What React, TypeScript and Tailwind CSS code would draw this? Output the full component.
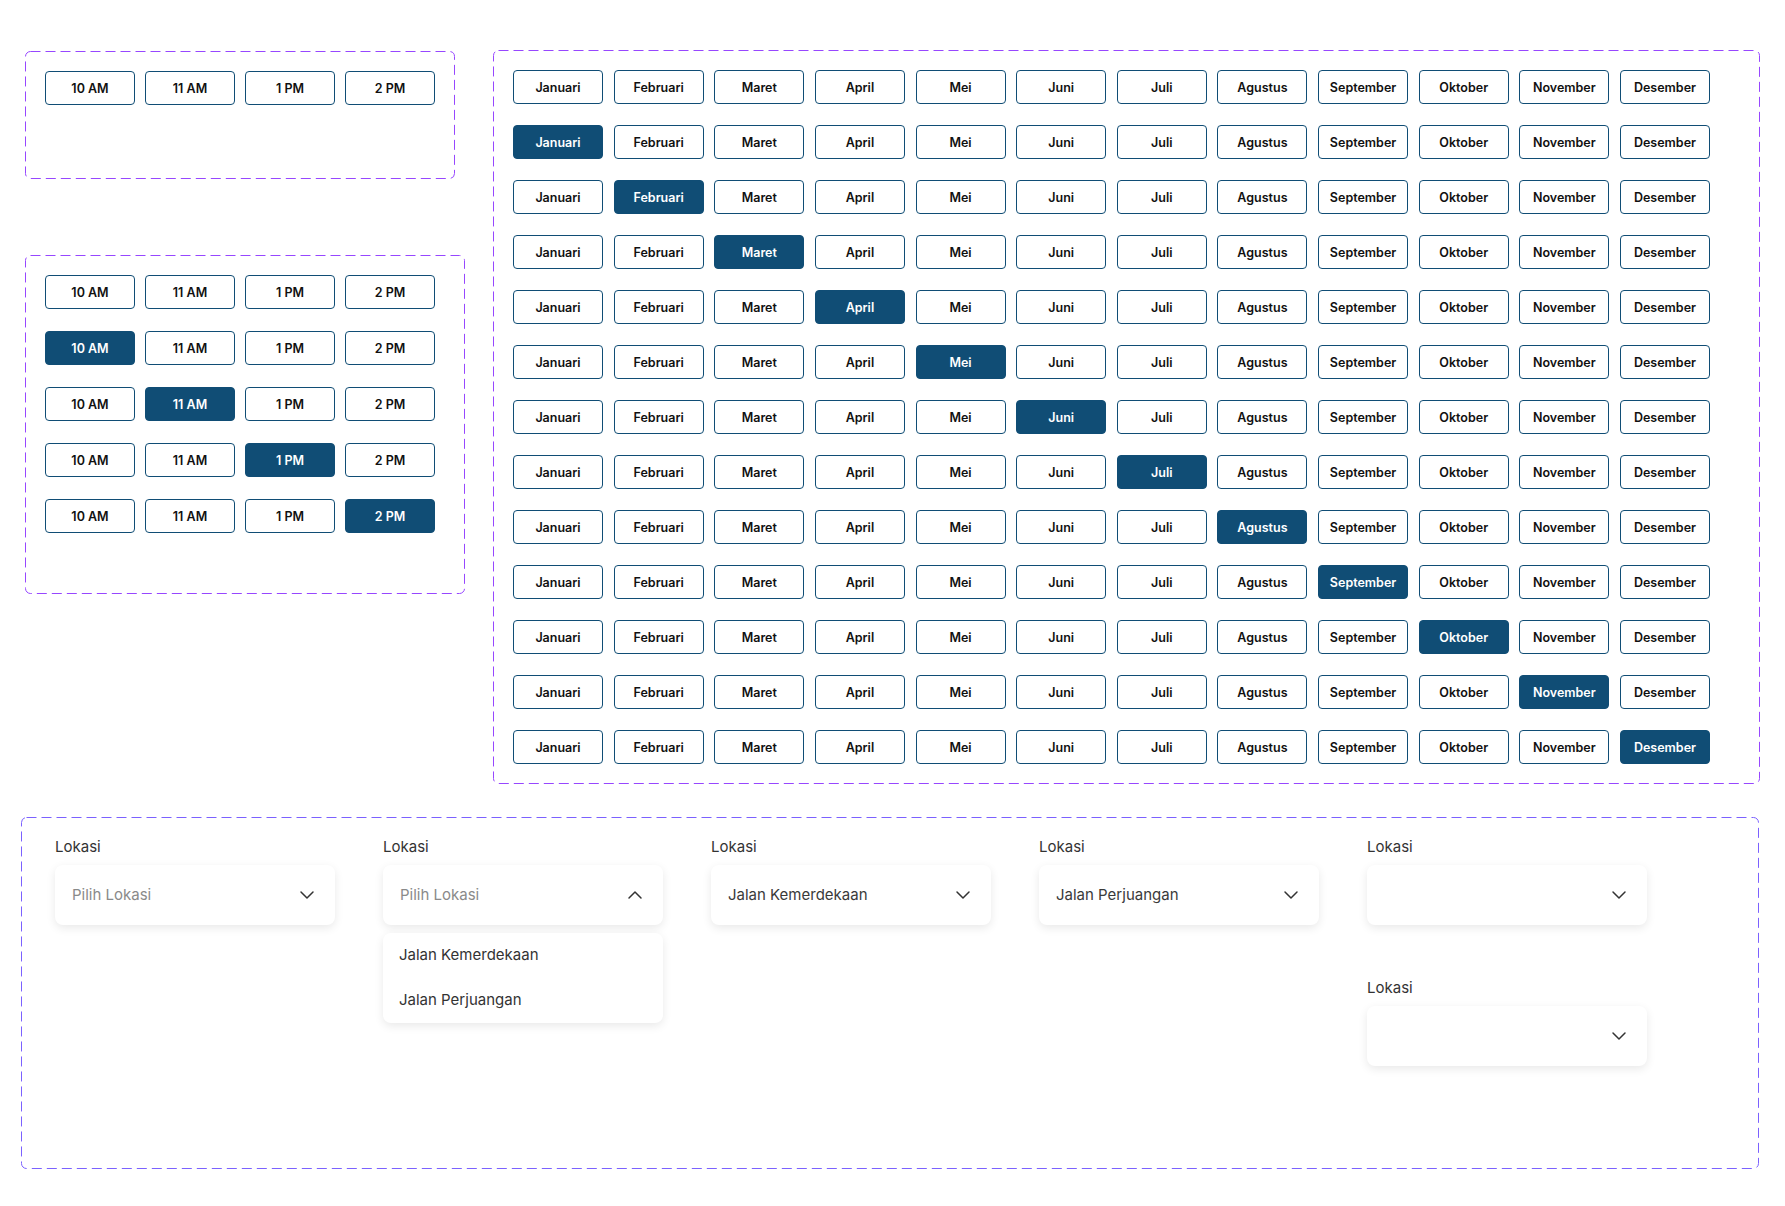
import { ChevronDown, ChevronUp } from "lucide-react";
import type { ReactNode } from "react";

const times = ["10 AM", "11 AM", "1 PM", "2 PM"];
const months = [
  "Januari",
  "Februari",
  "Maret",
  "April",
  "Mei",
  "Juni",
  "Juli",
  "Agustus",
  "September",
  "Oktober",
  "November",
  "Desember",
];

// Figma-style dashed frame around a component set
function Frame({ color, className, children }: { color: string; className: string; children: ReactNode }) {
  return (
    <div className={`relative ${className}`}>
      <svg className="pointer-events-none absolute inset-0 h-full w-full overflow-visible">
        <rect
          x="0.5"
          y="0.5"
          rx="5"
          className="h-[calc(100%-1px)] w-[calc(100%-1px)]"
          fill="none"
          stroke={color}
          strokeDasharray="10 5"
        />
      </svg>
      {children}
    </div>
  );
}

function Chip({ label, active, className = "" }: { label: string; active?: boolean; className?: string }) {
  return (
    <button
      className={`flex h-[34px] items-center justify-center rounded-[4px] border border-[#104d75] pt-[2px] text-[12.5px] font-semibold ${
        active ? "bg-[#104d75] text-white" : "bg-white text-[#111]"
      } ${className}`}
    >
      {label}
    </button>
  );
}

function Select({
  value,
  placeholder,
  open,
  options = [],
}: {
  value?: string;
  placeholder?: string;
  open?: boolean;
  options?: string[];
}) {
  return (
    <div className="w-[280px]">
      <div className="text-[15px] leading-5 text-[#333]">Lokasi</div>
      <div className="relative mt-2">
        <button className="flex h-[60px] w-full items-center justify-between rounded-lg bg-white pl-[17px] pr-4 shadow-[0_3px_10px_rgba(0,0,0,0.09)]">
          {value ? (
            <span className="text-[15px] text-[#3a3a3a]">{value}</span>
          ) : (
            <span className="text-[15px] text-[#8a8a8a]">{placeholder}</span>
          )}
          {open ? (
            <ChevronUp size={24} strokeWidth={1.5} className="text-[#333]" />
          ) : (
            <ChevronDown size={24} strokeWidth={1.5} className="text-[#333]" />
          )}
        </button>
        {open && (
          <div className="absolute left-0 top-full mt-2 w-full rounded-lg bg-white shadow-[0_3px_10px_rgba(0,0,0,0.09)]">
            {options.map((o) => (
              <div key={o} className="flex h-[45px] items-center px-4 text-[15px] text-[#333]">
                {o}
              </div>
            ))}
          </div>
        )}
      </div>
    </div>
  );
}

export default function App() {
  return (
    <div className="min-h-screen bg-white pt-[50px] font-['Inter',sans-serif]">
      <div className="flex items-start">
        <div className="ml-[25px] mt-px flex flex-col gap-[76px]">
          <Frame color="#9747ff" className="h-[128px] w-[430px] pl-5 pt-5">
            <div className="flex gap-[10px]">
              {times.map((t) => (
                <Chip key={t} label={t} className="w-[90px]" />
              ))}
            </div>
          </Frame>

          <Frame color="#9747ff" className="h-[339px] w-[440px] pl-5 pt-5">
            <div className="flex flex-col gap-[22px]">
              {[-1, 0, 1, 2, 3].map((sel) => (
                <div key={sel} className="flex gap-[10px]">
                  {times.map((t, i) => (
                    <Chip key={t} label={t} active={i === sel} className="w-[90px]" />
                  ))}
                </div>
              ))}
            </div>
          </Frame>
        </div>

        <Frame color="#9747ff" className="ml-[28px] h-[734px] w-[1267px] pl-5 pt-5">
          <div className="grid w-[1197px] grid-cols-12 gap-x-[10.6px] gap-y-[21px]">
            {[-1, ...months.map((_, i) => i)].map((sel) =>
              months.map((m, i) => <Chip key={`${sel}-${m}`} label={m} active={i === sel} />)
            )}
          </div>
        </Frame>
      </div>

      <Frame color="#7b61ff" className="ml-[21px] mt-[33px] h-[352px] w-[1738px] pl-[34px] pt-5">
        <div className="flex items-start gap-12">
          <Select placeholder="Pilih Lokasi" />
          <Select placeholder="Pilih Lokasi" open options={["Jalan Kemerdekaan", "Jalan Perjuangan"]} />
          <Select value="Jalan Kemerdekaan" />
          <Select value="Jalan Perjuangan" />
          <div className="flex flex-col gap-[53px]">
            <Select />
            <Select />
          </div>
        </div>
      </Frame>
    </div>
  );
}
